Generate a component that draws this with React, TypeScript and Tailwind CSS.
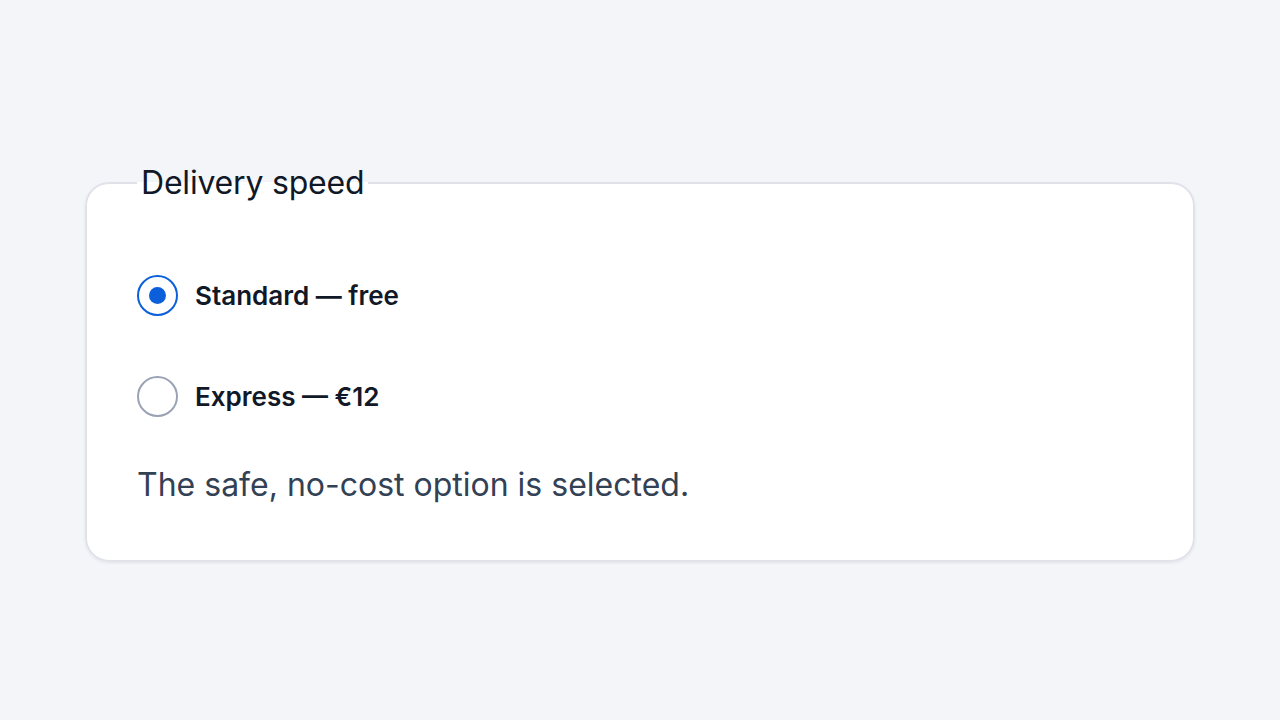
import React, { useState } from "react";

const options = [
  { id: "standard", label: "Standard — free" },
  { id: "express", label: "Express — €12" },
];

const App = () => {
  const [value, setValue] = useState("standard");

  return (
    <div
      className="min-h-screen bg-[#f4f5f9] px-[85px] pt-[165px]"
      style={{ fontFamily: "Inter, 'Noto Sans', sans-serif" }}
    >
      <fieldset className="rounded-[24px] border-2 border-[#dfe2e9] bg-white px-[50px] pb-[57px] pt-[74px] shadow-[0_1px_3px_rgba(15,23,42,0.08)]">
        <legend className="px-[4px] text-[32px] leading-[36px] tracking-[-0.2px] text-[#111827]">Delivery speed</legend>
        <div className="flex flex-col gap-[60px]">
          {options.map((o) => {
            const checked = value === o.id;
            return (
              <label key={o.id} className="flex items-center gap-[17px] cursor-pointer" onClick={() => setValue(o.id)}>
                <span
                  className={
                    checked
                      ? "flex h-[41px] w-[41px] items-center justify-center rounded-full border-2 border-[#0b5fdb]"
                      : "flex h-[41px] w-[41px] items-center justify-center rounded-full border-2 border-[#9aa3b5]"
                  }
                >
                  {checked && <span className="h-[17px] w-[17px] rounded-full bg-[#0b5fdb]" />}
                </span>
                <span className="text-[26px] font-semibold text-[#111827]">{o.label}</span>
              </label>
            );
          })}
        </div>
        <p className="mt-[50px] text-[32px] leading-[36px] text-[#334155]">The safe, no-cost option is selected.</p>
      </fieldset>
    </div>
  );
};

export default App;
